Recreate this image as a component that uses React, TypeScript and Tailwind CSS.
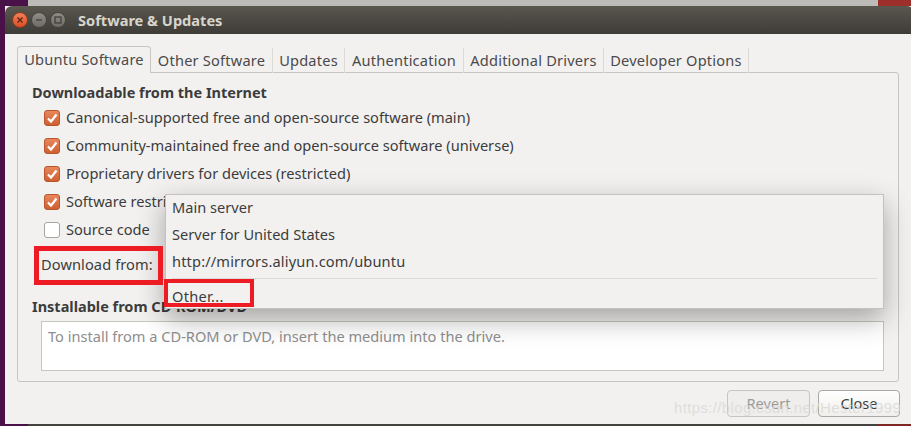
const font = { fontFamily: '"Noto Sans", "Open Sans", sans-serif' }

const tabs = [
  { label: "Other Software", w: "w-[122px]" },
  { label: "Updates", w: "w-[72px]" },
  { label: "Authentication", w: "w-[119px]" },
  { label: "Additional Drivers", w: "w-[140px]" },
  { label: "Developer Options", w: "w-[145px]" },
]

const sources = [
  { label: "Canonical-supported free and open-source software (main)", checked: true },
  { label: "Community-maintained free and open-source software (universe)", checked: true },
  { label: "Proprietary drivers for devices (restricted)", checked: true },
  { label: "Software restricted by copyright or legal issues (multiverse)", checked: true },
  { label: "Source code", checked: false },
]

function Checkbox({ checked }: { checked: boolean }) {
  if (!checked) {
    return <span className="h-[16px] w-[16px] shrink-0 rounded-[3px] border border-[#a8a49f] bg-white" />
  }
  return (
    <span className="flex h-[16px] w-[16px] shrink-0 items-center justify-center rounded-[3px] border border-[#b5562b] bg-gradient-to-b from-[#e8875c] to-[#cf5f30]">
      <svg width="12" height="12" viewBox="0 0 12 12" fill="none">
        <path d="M2 6.5 L5 9.5 L10.5 2.5" stroke="#fff" strokeWidth="2.2" />
      </svg>
    </span>
  )
}

function WindowButton({ kind }: { kind: "close" | "min" | "max" }) {
  if (kind === "close") {
    return (
      <span className="flex h-[16px] w-[16px] items-center justify-center rounded-full border border-[#8f3a1c] bg-gradient-to-b from-[#f0805a] to-[#dc4d22]">
        <svg width="8" height="8" viewBox="0 0 8 8">
          <path d="M1.5 1.5 L6.5 6.5 M6.5 1.5 L1.5 6.5" stroke="#5c2412" strokeWidth="1.3" />
        </svg>
      </span>
    )
  }
  return (
    <span className="flex h-[16px] w-[16px] items-center justify-center rounded-full border border-[#45443e] bg-gradient-to-b from-[#8f8d85] to-[#6e6c65]">
      <svg width="8" height="8" viewBox="0 0 8 8" fill="none">
        {kind === "min" ? (
          <path d="M1 4 H7" stroke="#3d3c37" strokeWidth="1.2" />
        ) : (
          <rect x="1" y="1" width="6" height="6" stroke="#3d3c37" strokeWidth="1.2" />
        )}
      </svg>
    </span>
  )
}

export default function App() {
  return (
    <div className="relative flex h-[426px] w-[911px] flex-col overflow-hidden bg-[#4a1149] text-[14.6px] text-[#3c3c3c]" style={font}>
      <div className="flex h-[6px] shrink-0">
        <div className="w-[28px] bg-[#4a1149]" />
        <div className="flex-1 bg-[#bdbcb8]" />
        <div className="w-[33px] bg-[#9c2f2a]" />
      </div>

      <div className="flex min-h-0 flex-1 pl-[5px]">
        <div className="flex flex-1 flex-col bg-[#f2f1f0]">
          {/* Title bar */}
          <div className="flex h-[28px] shrink-0 items-center rounded-t-[7px] bg-gradient-to-b from-[#5a574e] to-[#3e3c37] pl-[7px]">
            <div className="flex gap-[3px]">
              <WindowButton kind="close" />
              <WindowButton kind="min" />
              <WindowButton kind="max" />
            </div>
            <span className="ml-[12px] mt-[1px] text-[14.6px] font-bold text-[#d8d5cd]">Software &amp; Updates</span>
          </div>

          <div className="flex min-h-0 flex-1 flex-col pl-[12px] pr-[15px] pt-[12px]">
            {/* Tabs */}
            <div className="relative z-10 flex h-[27px] shrink-0 tracking-[0.2px]">
              <div className="flex w-[134px] items-center justify-center rounded-t-[4px] border border-b-0 border-[#c8c5c0] bg-[#f2f1f0] text-[#4a4a4a]">
                Ubuntu Software
              </div>
              {tabs.map((tab) => (
                <div key={tab.label} className={`${tab.w} mt-[2px] flex items-center justify-center border-r border-[#dcdad6] text-[#4a4a4a]`}>
                  {tab.label}
                </div>
              ))}
            </div>

            {/* Frame */}
            <div className="-mt-px flex h-[310px] shrink-0 flex-col rounded-b-[3px] rounded-tr-[3px] border border-[#c8c5c0] px-[14px] pt-[9px]">
              <div className="text-[14.5px] font-bold leading-[20px] text-[#3c3c3c]">Downloadable from the Internet</div>
              <div className="mt-[2px] flex flex-col pl-[12px]">
                {sources.map((s) => (
                  <div key={s.label} className="flex h-[28px] items-center gap-[6px]">
                    <Checkbox checked={s.checked} />
                    <span className="whitespace-nowrap">{s.label}</span>
                  </div>
                ))}
              </div>
              <div className="mt-[7px] flex h-[28px] items-center pl-[9px] tracking-[0.1px]">Download from:</div>
              <div className="mt-[17px] text-[14.5px] font-bold leading-[20px]">Installable from CD-ROM/DVD</div>
              <div className="ml-[9px] mt-[5px] h-[50px] w-[843px] shrink-0 whitespace-nowrap border border-[#c8c5c0] bg-white px-[6px] pt-[4px] text-[#8e8e8e]">
                To install from a CD-ROM or DVD, insert the medium into the drive.
              </div>
            </div>

            {/* Buttons */}
            <div className="mt-[8px] flex justify-end gap-[8px]">
              <div className="flex h-[27px] w-[83px] items-center justify-center rounded-[4px] border border-[#c8c5c0] bg-[#efeeec] text-[#9a9a9a]">Revert</div>
              <div className="-mr-[1px] flex h-[27px] w-[82px] items-center justify-center rounded-[4px] border border-[#aaa8a3] bg-gradient-to-b from-white to-[#f0efed] text-[#3c3c3c]">Close</div>
            </div>
          </div>
        </div>
      </div>

      <div className="flex h-[2px] shrink-0">
        <div className="w-[28px] bg-[#4a1149]" />
        <div className="flex-1 bg-[#44423f]" />
        <div className="w-[33px] bg-[#7d2622]" />
      </div>

      {/* Dropdown menu */}
      <div className="absolute left-[165px] top-[194px] z-20 flex h-[115px] w-[719px] flex-col border border-[#c4c2be] bg-[#f2f1f0] pl-[6px] shadow-[0_10px_26px_rgba(0,0,0,0.32)]">
        <div className="flex h-[26px] items-center">Main server</div>
        <div className="flex h-[27px] items-center">Server for United States</div>
        <div className="flex h-[27px] items-center tracking-[0.15px]">http://mirrors.aliyun.com/ubuntu</div>
        <div className="mr-[6px] mt-[3px] border-t border-[#dcdad6]" />
        <div className="mt-[7px] flex h-[22px] items-center tracking-[0.3px]">Other...</div>
      </div>

      {/* Annotations */}
      <div className="absolute left-[34px] top-[246px] z-30 h-[39px] w-[129px] border-[5px] border-[#ed1c24]" />
      <div className="absolute left-[164px] top-[279px] z-30 h-[28px] w-[90px] border-[4px] border-[#ed1c24]" />

      {/* Watermark */}
      <div className="absolute left-[674px] top-[397px] z-30 whitespace-nowrap text-[15px] tracking-[0.35px] text-[#d9d8d6]/80" style={{ fontFamily: '"Liberation Sans", sans-serif' }}>
        https://blog.csdn.net/Hester1999
      </div>
    </div>
  )
}
